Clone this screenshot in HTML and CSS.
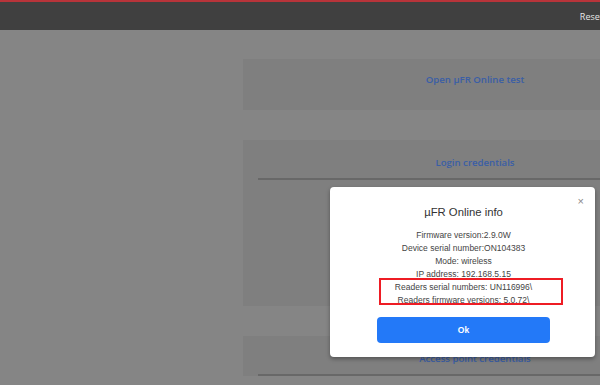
FILE: index.html
```html
<!DOCTYPE html>
<html lang="en">
<head>
<meta charset="utf-8">
<title>µFR Online info</title>
<link rel="stylesheet" href="styles.css">
</head>
<body>
<header class="topbar">
  <span class="reset">Reset</span>
</header>
<div class="page">
  <aside class="side"></aside>
  <main class="content">
    <section class="card card-single">
      <a class="card-title">Open µFR Online test</a>
    </section>
    <section class="card card-tall">
      <div class="card-head"><a class="card-title">Login credentials</a></div>
    </section>
    <section class="card">
      <div class="card-head"><a class="card-title">Access point credentials</a></div>
    </section>
  </main>
</div>

<div class="modal">
  <button class="close">×</button>
  <h2 class="modal-title">µFR Online info</h2>
  <div class="info">
    <p>Firmware version:2.9.0W</p>
    <p>Device serial number:ON104383</p>
    <p>Mode: wireless</p>
    <p>IP address: 192.168.5.15</p>
    <p>Readers serial numbers: UN116996\</p>
    <p>Readers firmware versions: 5.0.72\</p>
  </div>
  <button class="ok">Ok</button>
</div>
<div class="highlight"></div>
</body>
</html>
```

FILE: styles.css
```css
html, body {
  margin: 0;
  padding: 0;
}
body {
  width: 600px;
  height: 385px;
  overflow: hidden;
  background: #858585;
  font-family: "Liberation Sans", Arial, sans-serif;
  position: relative;
}
.topbar {
  height: 28px;
  border-top: 2px solid #b8343a;
  background: #404040;
  display: flex;
  justify-content: flex-end;
  align-items: center;
  overflow: hidden;
}
.reset {
  color: #e6e6e6;
  font-family: "Open Sans", sans-serif;
  font-size: 9px;
  margin-right: -3px;
}
.page {
  display: flex;
}
.side {
  width: 243px;
  flex-shrink: 0;
}
.content {
  width: 464px;
  flex-shrink: 0;
  padding-top: 29px;
  display: flex;
  flex-direction: column;
  gap: 30px;
}
.card {
  background: #7f7f7f;
}
.card-single {
  height: 51px;
  display: flex;
  justify-content: center;
  padding-top: 14px;
  box-sizing: border-box;
}
.card-tall {
  height: 166px;
}
.card-head {
  margin: 0 15px;
  height: 40px;
  box-sizing: border-box;
  padding-top: 12px;
  border-bottom: 2px solid #686868;
  text-align: center;
}
.card-title {
  display: inline-block;
  font-family: "Open Sans", sans-serif;
  font-weight: 600;
  font-size: 9.6px;
  line-height: 14px;
  color: #3a5ea6;
}
.modal {
  position: absolute;
  left: 330px;
  top: 187px;
  width: 265px;
  height: 170px;
  box-sizing: border-box;
  background: #ffffff;
  border-radius: 4px;
  box-shadow: 0 2px 4px rgba(0, 0, 0, 0.35);
  padding: 16px 45px 0 47px;
  display: flex;
  flex-direction: column;
  align-items: stretch;
  text-align: center;
  color: #333333;
}
.close {
  position: absolute;
  right: 11px;
  top: 7px;
  border: none;
  background: none;
  padding: 0;
  font-family: "Liberation Sans", sans-serif;
  font-size: 11px;
  line-height: 14px;
  color: #8a8a8a;
}
.modal-title {
  margin: 0;
  font-size: 11.3px;
  line-height: 18px;
  font-weight: 400;
  color: #333333;
}
.info {
  margin-top: 8px;
}
.info p {
  margin: 0;
  font-size: 8.5px;
  line-height: 13px;
  color: #444444;
  white-space: nowrap;
}
.ok {
  margin-top: 10px;
  height: 26px;
  border: none;
  border-radius: 4px;
  background: #2379f8;
  color: #ffffff;
  font-family: "Liberation Sans", sans-serif;
  font-weight: 700;
  font-size: 8.5px;
}
.highlight {
  position: absolute;
  left: 379px;
  top: 278px;
  width: 184px;
  height: 27px;
  box-sizing: border-box;
  border: 2px solid #ee1c24;
}
```
